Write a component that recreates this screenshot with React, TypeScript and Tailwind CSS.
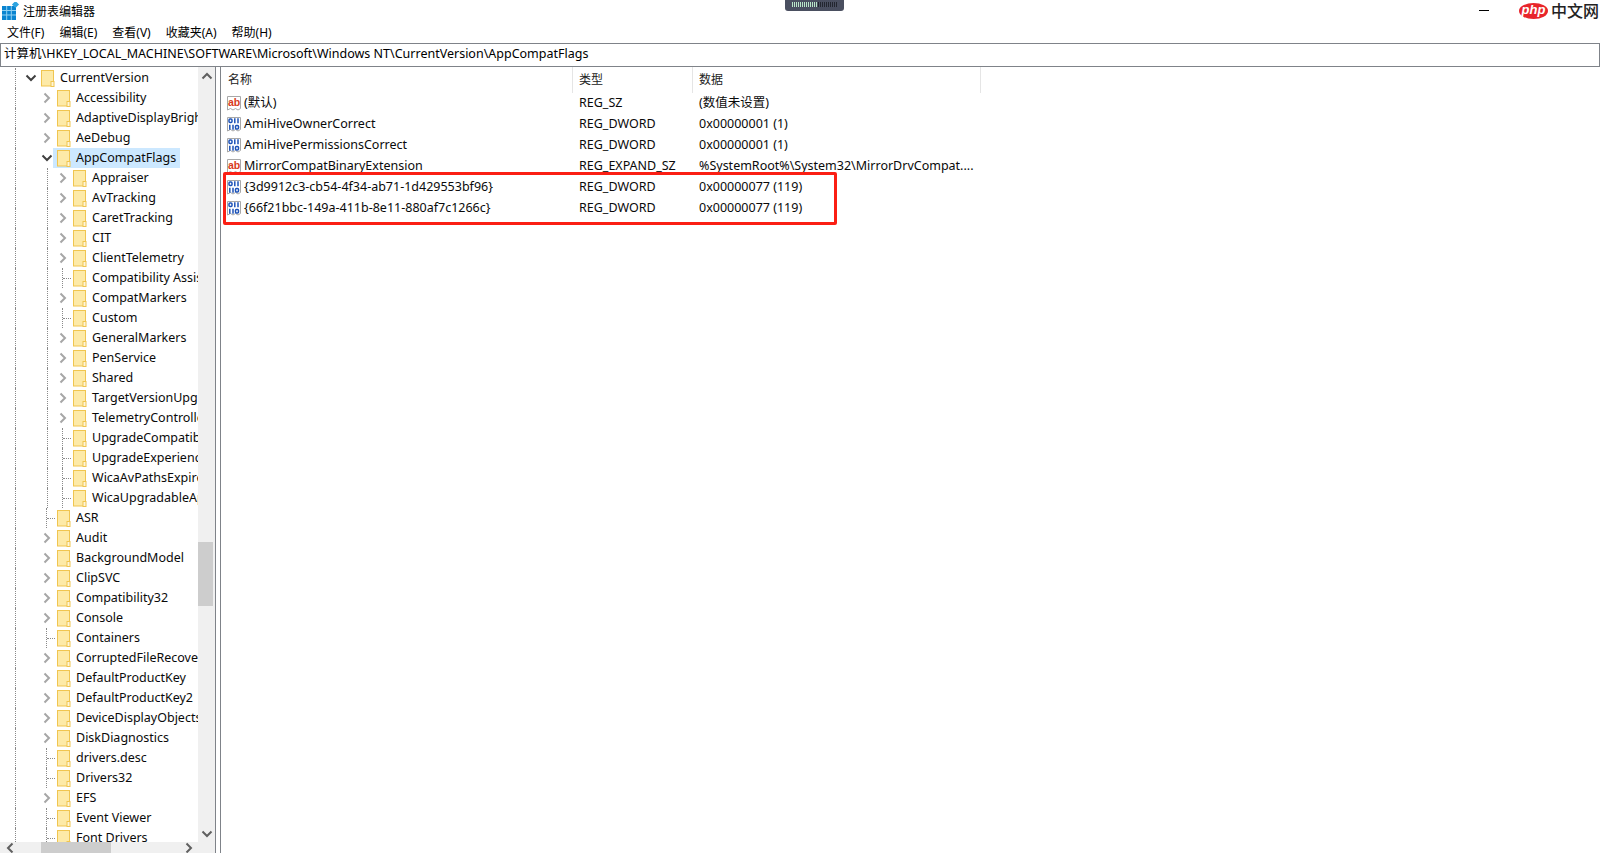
import React from 'react'

const uiFont = { fontFamily: '"Noto Sans", "Noto Sans CJK SC", sans-serif' }

/* tree rows: [label, level, kind] */
type Kind = 'closed' | 'open' | 'leaf'
const treeRows: [string, number, Kind][] = [
  ['CurrentVersion', 1, 'open'],
  ['Accessibility', 2, 'closed'],
  ['AdaptiveDisplayBrightness', 2, 'closed'],
  ['AeDebug', 2, 'closed'],
  ['AppCompatFlags', 2, 'open'],
  ['Appraiser', 3, 'closed'],
  ['AvTracking', 3, 'closed'],
  ['CaretTracking', 3, 'closed'],
  ['CIT', 3, 'closed'],
  ['ClientTelemetry', 3, 'closed'],
  ['Compatibility Assistant', 3, 'leaf'],
  ['CompatMarkers', 3, 'closed'],
  ['Custom', 3, 'leaf'],
  ['GeneralMarkers', 3, 'closed'],
  ['PenService', 3, 'closed'],
  ['Shared', 3, 'closed'],
  ['TargetVersionUpgrade', 3, 'closed'],
  ['TelemetryController', 3, 'closed'],
  ['UpgradeCompatibility', 3, 'leaf'],
  ['UpgradeExperience', 3, 'leaf'],
  ['WicaAvPathsExpired', 3, 'leaf'],
  ['WicaUpgradableApps', 3, 'leaf'],
  ['ASR', 2, 'leaf'],
  ['Audit', 2, 'closed'],
  ['BackgroundModel', 2, 'closed'],
  ['ClipSVC', 2, 'closed'],
  ['Compatibility32', 2, 'closed'],
  ['Console', 2, 'closed'],
  ['Containers', 2, 'leaf'],
  ['CorruptedFileRecovery', 2, 'closed'],
  ['DefaultProductKey', 2, 'closed'],
  ['DefaultProductKey2', 2, 'closed'],
  ['DeviceDisplayObjects', 2, 'closed'],
  ['DiskDiagnostics', 2, 'closed'],
  ['drivers.desc', 2, 'leaf'],
  ['Drivers32', 2, 'leaf'],
  ['EFS', 2, 'closed'],
  ['Event Viewer', 2, 'leaf'],
  ['Font Drivers', 2, 'leaf'],
]

const valueRows: [string, 'sz' | 'bin', string, string][] = [
  ['(默认)', 'sz', 'REG_SZ', '(数值未设置)'],
  ['AmiHiveOwnerCorrect', 'bin', 'REG_DWORD', '0x00000001 (1)'],
  ['AmiHivePermissionsCorrect', 'bin', 'REG_DWORD', '0x00000001 (1)'],
  ['MirrorCompatBinaryExtension', 'sz', 'REG_EXPAND_SZ', '%SystemRoot%\\System32\\MirrorDrvCompat....'],
  ['{3d9912c3-cb54-4f34-ab71-1d429553bf96}', 'bin', 'REG_DWORD', '0x00000077 (119)'],
  ['{66f21bbc-149a-411b-8e11-880af7c1266c}', 'bin', 'REG_DWORD', '0x00000077 (119)'],
]

const Folder = () => (
  <svg width="14" height="17" viewBox="0 0 14 17" className="shrink-0">
    <rect x="0.5" y="0.5" width="12" height="15.5" fill="#fdeaa8" stroke="#f0c550" />
    <rect x="10" y="11.5" width="3" height="5" fill="#fff6d8" stroke="#f0c550" />
  </svg>
)

const Chevron = ({ open }: { open: boolean }) =>
  open ? (
    <svg width="12" height="8" viewBox="0 0 12 8">
      <path d="M1.5 1.5L6 6l4.5-4.5" fill="none" stroke="#404040" strokeWidth="2" />
    </svg>
  ) : (
    <svg width="8" height="12" viewBox="0 0 8 12">
      <path d="M1.5 1.5L6 6l-4.5 4.5" fill="none" stroke="#a6a6a6" strokeWidth="2" />
    </svg>
  )

const Guide = () => (
  <div className="w-4 h-full shrink-0 flex justify-center">
    <div className="h-full border-l border-dotted border-[#8a8a8a]" />
  </div>
)

const Stub = () => (
  <div className="w-4 h-full shrink-0 flex">
    <div className="w-[8px] h-full border-r border-dotted border-[#8a8a8a]" />
    <div className="w-[8px] self-center border-t border-dotted border-[#8a8a8a]" />
  </div>
)

const ChevronCell = ({ open }: { open: boolean }) => (
  <div className="w-4 h-full shrink-0 flex items-center justify-center">
    <Chevron open={open} />
  </div>
)

const TreeRow = ({ label, level, kind }: { label: string; level: number; kind: Kind }) => {
  const selected = label === 'AppCompatFlags'
  return (
    <div className="h-5 flex items-center shrink-0">
      <div className="w-[7px] shrink-0" />
      <Guide />
      {level === 1 ? <ChevronCell open /> : <div className="w-4 shrink-0" />}
      {level === 3 && <Guide />}
      {level >= 2 && (kind === 'leaf' ? <Stub /> : <ChevronCell open={kind === 'open'} />)}
      <div className={`h-5 -ml-[2px] flex items-center pl-[4px] pr-1 ${selected ? 'bg-[#cce8ff]' : ''}`}>
        <Folder />
        <span className="ml-[5px] whitespace-nowrap text-[12.5px] text-[#0a0a0a] leading-none">{label}</span>
      </div>
    </div>
  )
}

const ValueIcon = ({ type }: { type: 'sz' | 'bin' }) => (
  <svg width="17" height="17" viewBox="0 0 17 17" className="shrink-0">
    <path d="M1.5 1.5h13v12l-2.5 1.5-2.5-1.5-2.5 1.5-2.5-1.5-3 1.5z" fill="#fff" stroke="#a8a8a8" />
    {type === 'sz' ? (
      <text x="2" y="11" fontSize="10.5" fontWeight="bold" fill="#d83b20" fontFamily="Liberation Sans, sans-serif">
        ab
      </text>
    ) : (
      <g fill="none" stroke="#1c52b8" strokeWidth="1.5">
        <rect x="3" y="3" width="3" height="3.5" rx="1" />
        <path d="M8.8 2.2v5M12 2.2v5" />
        <path d="M3.8 8.8v5M7 8.8v5" />
        <rect x="9.5" y="9.5" width="3" height="3.5" rx="1" />
      </g>
    )}
  </svg>
)

const App = () => {
  return (
    <div className="w-[1600px] h-[853px] bg-white flex flex-col overflow-hidden relative" style={uiFont}>
      {/* title bar */}
      <div className="h-[22px] flex items-center shrink-0 relative">
        <svg width="18" height="18" viewBox="0 0 18 18" className="ml-[2px] shrink-0">
          <rect x="0" y="4" width="14" height="14" fill="#0a84d0" />
          <path d="M0 8.5h14M0 13h14M4.7 4v14M9.3 4v14" stroke="#8fd0f2" strokeWidth="1" />
          <rect x="11" y="0" width="5" height="5" transform="rotate(45 13.5 2.5)" fill="#2ea4e0" />
        </svg>
        <span className="ml-[3px] mt-[2px] text-[12px] leading-none text-black">注册表编辑器</span>
        {/* capture widget at the top of the screen */}
        <div className="absolute left-[785px] top-0 w-[59px] h-[11px] rounded-b-[3px] bg-[#4a4f60] flex gap-px items-start justify-center pt-[2px]">
          {Array.from({ length: 23 }).map((_, i) => (
            <div key={i} className={`w-px h-[5px] ${i < 13 ? 'bg-[#b9e6c8]' : 'bg-[#23262f]'}`} />
          ))}
        </div>
        <div className="ml-auto flex items-center -mt-[1px]">
          <div className="w-[10px] h-px bg-black mr-[30px]" />
          <div className="w-[29px] h-[16px] rounded-[50%] bg-[#e8252b] flex items-center justify-center mr-[3px]">
            <span className="text-white italic font-bold text-[13px] leading-none -mt-[2px]" style={{ fontFamily: '"Liberation Sans", sans-serif' }}>
              php
            </span>
          </div>
          <span className="text-[16px] leading-none text-[#222] font-medium mr-[1px]">中文网</span>
        </div>
      </div>
      {/* menu */}
      <div className="h-[21px] flex items-center shrink-0 pl-[7px] gap-[15px] text-[12px] text-black leading-none">
        <span>文件(F)</span>
        <span>编辑(E)</span>
        <span>查看(V)</span>
        <span>收藏夹(A)</span>
        <span>帮助(H)</span>
      </div>
      {/* address bar */}
      <div className="h-[24px] shrink-0 border border-[#7f8389] flex items-center pl-[3px] pb-px text-[12.5px] leading-none text-black whitespace-nowrap">
        计算机\HKEY_LOCAL_MACHINE\SOFTWARE\Microsoft\Windows NT\CurrentVersion\AppCompatFlags
      </div>
      {/* panes */}
      <div className="flex-1 flex min-h-0 bg-white">
        <div className="w-[216px] shrink-0 flex flex-col border-r border-[#7f8389]">
          <div className="flex-1 flex min-h-0">
            <div className="w-[198px] shrink-0 overflow-hidden flex flex-col pt-px">
              {treeRows.map(([label, level, kind]) => (
                <TreeRow key={label} label={label} level={level} kind={kind} />
              ))}
            </div>
            {/* vertical scrollbar */}
            <div className="w-[17px] shrink-0 bg-[#f0f0f0] flex flex-col">
              <div className="h-[17px] flex items-center justify-center shrink-0">
                <svg width="12" height="8" viewBox="0 0 12 8"><path d="M1.5 6.5L6 2l4.5 4.5" fill="none" stroke="#606060" strokeWidth="2" /></svg>
              </div>
              <div className="h-[458px] shrink-0" />
              <div className="h-[64px] w-[15px] bg-[#cdcdcd] shrink-0" />
              <div className="flex-1" />
              <div className="h-[17px] flex items-center justify-center shrink-0">
                <svg width="12" height="8" viewBox="0 0 12 8"><path d="M1.5 1.5L6 6l4.5-4.5" fill="none" stroke="#606060" strokeWidth="2" /></svg>
              </div>
            </div>
          </div>
          {/* horizontal scrollbar */}
          <div className="h-[11px] shrink-0 bg-[#f0f0f0] flex items-center">
            <div className="w-[4px] shrink-0" />
            <div className="w-[12px] shrink-0 flex justify-center">
              <svg width="8" height="12" viewBox="0 0 8 12"><path d="M6.5 1.5L2 6l4.5 4.5" fill="none" stroke="#606060" strokeWidth="2" /></svg>
            </div>
            <div className="w-[25px] shrink-0" />
            <div className="w-[70px] h-full bg-[#cdcdcd] shrink-0" />
            <div className="w-[72px] shrink-0" />
            <div className="w-[12px] shrink-0 flex justify-center">
              <svg width="8" height="12" viewBox="0 0 8 12"><path d="M1.5 1.5L6 6l-4.5 4.5" fill="none" stroke="#606060" strokeWidth="2" /></svg>
            </div>
          </div>
        </div>
        <div className="w-[4px] shrink-0" />
        <div className="flex-1 border-l border-[#7f8389] flex flex-col min-w-0 relative">
          <div className="h-[26px] flex shrink-0 text-[12px] leading-none text-[#222]">
            <div className="w-[352px] pl-[7px] flex items-center border-r border-[#e5e5e5]">名称</div>
            <div className="w-[120px] pl-[6px] flex items-center border-r border-[#e5e5e5]">类型</div>
            <div className="w-[288px] pl-[6px] flex items-center border-r border-[#e5e5e5]">数据</div>
          </div>
          <div className="flex flex-col">
            {valueRows.map(([name, type, kind, data]) => (
              <div key={name} className="h-[21px] flex items-center text-[12.5px] leading-none text-[#0a0a0a] whitespace-nowrap">
                <div className="w-[352px] shrink-0 pl-[5px] flex items-center">
                  <ValueIcon type={type} />
                  <span className="ml-[1px]">{name}</span>
                </div>
                <div className="w-[120px] shrink-0 pl-[6px]">{kind}</div>
                <div className="pl-[6px]">{data}</div>
              </div>
            ))}
          </div>
          {/* red annotation box */}
          <div className="absolute left-[2px] top-[105px] w-[614px] h-[53px] border-[3px] border-[#fb1f14] rounded-[2px]" />
        </div>
      </div>
    </div>
  )
}

export default App
